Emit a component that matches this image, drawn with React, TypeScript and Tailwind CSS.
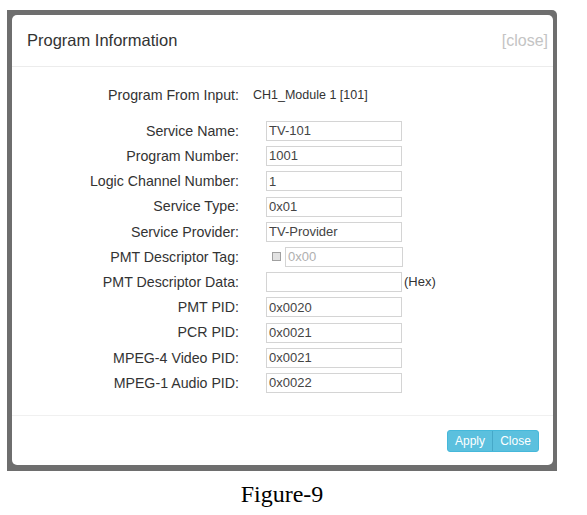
import React from "react";

type Row = { label: string; value: string };

const rowsTop: Row[] = [
  { label: "Service Name:", value: "TV-101" },
  { label: "Program Number:", value: "1001" },
  { label: "Logic Channel Number:", value: "1" },
  { label: "Service Type:", value: "0x01" },
  { label: "Service Provider:", value: "TV-Provider" },
];

const rowsBottom: Row[] = [
  { label: "PMT PID:", value: "0x0020" },
  { label: "PCR PID:", value: "0x0021" },
  { label: "MPEG-4 Video PID:", value: "0x0021" },
  { label: "MPEG-1 Audio PID:", value: "0x0022" },
];

function Label({ children }: { children: React.ReactNode }) {
  return (
    <span className="w-[227px] shrink-0 text-right text-[14.2px] leading-none text-[#333]">
      {children}
    </span>
  );
}

function Field({ value, className = "" }: { value: string; className?: string }) {
  return (
    <div
      className={`flex h-[20px] w-[136px] items-center border border-[#d4d4d4] bg-white px-[2px] text-[13px] text-[#444] ${className}`}
    >
      {value}
    </div>
  );
}

export default function App() {
  return (
    <div className="h-[515px] w-[587px] bg-white font-['Liberation_Sans',Arial,sans-serif]">
      <div className="ml-[7px] w-[550px] pt-[10px]">
        <div className="rounded-tr-[5px] bg-[#6e6e6e] pb-[6px] pl-[5px] pr-[4px] pt-[5px]">
          <div className="flex h-[450px] flex-col rounded-[5px] bg-white">
            {/* header */}
            <div className="flex h-[52px] shrink-0 items-center justify-between border-b border-[#ececec] pl-[15px] pr-[5px]">
              <span className="text-[16.5px] text-[#333]">Program Information</span>
              <span className="text-[16px] text-[#c4c4c4]">[close]</span>
            </div>

            {/* body */}
            <div className="flex flex-1 flex-col pt-[18px]">
              <div className="flex h-[20px] items-center">
                <Label>Program From Input:</Label>
                <span className="ml-[14px] text-[12.5px] text-[#333]">CH1_Module 1 [101]</span>
              </div>

              <div className="mt-[16px] flex flex-col gap-[5.2px]">
                {rowsTop.map((r) => (
                  <div key={r.label} className="flex h-[20px] items-center">
                    <Label>{r.label}</Label>
                    <Field value={r.value} className="ml-[27px]" />
                  </div>
                ))}

                <div className="flex h-[20px] items-center">
                  <Label>PMT Descriptor Tag:</Label>
                  <span className="ml-[33px] h-[9px] w-[9px] border border-[#a0a0a0] bg-[#e2e2e2]" />
                  <div className="ml-[4px] flex h-[20px] w-[118px] items-center border border-[#d4d4d4] px-[2px] text-[13px] text-[#b0b0b0]">
                    0x00
                  </div>
                </div>

                <div className="flex h-[20px] items-center">
                  <Label>PMT Descriptor Data:</Label>
                  <Field value="" className="ml-[27px]" />
                  <span className="ml-[2px] text-[13px] text-[#333]">(Hex)</span>
                </div>

                {rowsBottom.map((r) => (
                  <div key={r.label} className="flex h-[20px] items-center">
                    <Label>{r.label}</Label>
                    <Field value={r.value} className="ml-[27px]" />
                  </div>
                ))}
              </div>
            </div>

            {/* footer */}
            <div className="flex h-[50px] shrink-0 items-start justify-end border-t border-[#f0f0f0] pr-[14px] pt-[14px]">
              <div className="flex h-[22px] overflow-hidden rounded-[3px] border border-[#46b8da] bg-[#5bc0de] text-[12px] text-white">
                <span className="flex w-[45px] items-center justify-center border-r border-[#46a8c8]">Apply</span>
                <span className="flex w-[45px] items-center justify-center">Close</span>
              </div>
            </div>
          </div>
        </div>

        <div className="mt-[5px] text-center font-['Liberation_Serif','Times_New_Roman',serif] text-[24px] text-black">
          Figure-9
        </div>
      </div>
    </div>
  );
}
